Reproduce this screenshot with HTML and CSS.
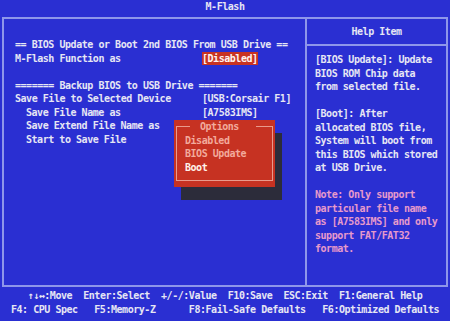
FILE: index.html
```html
<!DOCTYPE html>
<html lang="en">
<head>
    <meta charset="UTF-8">
    <meta name="viewport" content="width=device-width, initial-scale=1.0">
    <link rel="stylesheet" href="styles.css">
    <title>M-Flash</title>
</head>
<body>
    <div class="screen">
        <div class="titlebar">M-Flash</div>

        <div class="frame">
            <div class="settings">
                <div class="row">== BIOS Update or Boot 2nd BIOS From USB Drive ==</div>
                <div class="row"><span class="label">M-Flash Function as</span><span class="selected">[Disabled]</span></div>
                <div class="row"></div>
                <div class="row">======= Backup BIOS to USB Drive =======</div>
                <div class="row"><span class="label">Save File to Selected Device</span><span>[USB:Corsair F1]</span></div>
                <div class="row"><span class="label sub">Save File Name as</span><span>[A7583IMS]</span></div>
                <div class="row"><span class="label sub">Save Extend File Name as</span></div>
                <div class="row"><span class="label sub">Start to Save File</span></div>
            </div>

            <div class="help">
                <div class="help-title">Help Item</div>
                <div class="help-text">
                    <div class="row">[BIOS Update]: Update</div>
                    <div class="row">BIOS ROM Chip data</div>
                    <div class="row">from selected file.</div>
                    <div class="row"></div>
                    <div class="row">[Boot]: After</div>
                    <div class="row">allocated BIOS file,</div>
                    <div class="row">System will boot from</div>
                    <div class="row">this BIOS which stored</div>
                    <div class="row">at USB Drive.</div>
                    <div class="row"></div>
                    <div class="row note">Note: Only support</div>
                    <div class="row note">particular file name</div>
                    <div class="row note">as [A7583IMS] and only</div>
                    <div class="row note">support FAT/FAT32</div>
                    <div class="row note">format.</div>
                </div>
            </div>
        </div>

        <div class="footer">
            <div class="keys">↑↓↔:Move  Enter:Select  +/-/:Value  F10:Save  ESC:Exit  F1:General Help</div>
            <div class="keys">F4: CPU Spec   F5:Memory-Z      F8:Fail-Safe Defaults   F6:Optimized Defaults</div>
        </div>

        <!-- option popup sits over the settings list -->
        <div class="popup">
            <div class="popup-frame"></div>
            <div class="popup-title">Options</div>
            <div class="popup-items">
                <div class="row">Disabled</div>
                <div class="row">BIOS Update</div>
                <div class="row current">Boot</div>
            </div>
        </div>
    </div>
</body>
</html>
```

FILE: styles.css
```css
body {
    margin: 0;
    background: #2a2fd2;
}

.screen {
    position: relative;
    width: 450px;
    height: 321px;
    overflow: hidden;
    background: #2a2fd2;
    color: #e6e6f4;
    font: bold 10px/13.5px "DejaVu Sans Mono", monospace;
    letter-spacing: -0.46px;
}

.titlebar {
    height: 17px;
    line-height: 13px;
    text-align: center;
}

.frame {
    height: 266px;
    margin: 0 2px;
    border: 2px solid #8e96ea;
    display: flex;
}

.row {
    height: 13.5px;
    display: flex;
    white-space: pre;
}

.settings {
    width: 301px;
    padding: 19px 0 0 11px;
    box-sizing: border-box;
}

.label {
    width: 187px;
}

.label.sub {
    padding-left: 11px;
    box-sizing: border-box;
}

.selected {
    background: #c83322;
    color: #fff4f0;
}

.help {
    flex: 1;
    border-left: 2px solid #8e96ea;
}

.help-title {
    height: 25px;
    line-height: 25px;
    text-align: center;
    border-bottom: 2px solid #8e96ea;
}

.help-text {
    padding: 7px 0 0 8px;
}

.note {
    color: #e79acb;
}

.footer {
    padding-top: 2px;
    text-align: center;
}

.keys {
    height: 14px;
    line-height: 14px;
    white-space: pre;
}

.popup {
    position: absolute;
    left: 174px;
    top: 120px;
    width: 101px;
    height: 67px;
    background: #c63222;
    box-shadow: 7px 13px 0 #2c2c3a;
    color: #f2aa9c;
}

.popup-frame {
    position: absolute;
    top: 6px;
    left: 2px;
    right: 2px;
    bottom: 6px;
    border: 1px solid #e99a8c;
}

.popup-title {
    position: absolute;
    top: 0;
    left: 16px;
    padding: 0 17px 0 10px;
    background: #c63222;
    white-space: pre;
}

.popup-items {
    position: absolute;
    top: 13.5px;
    left: 11px;
}

.popup-items .current {
    color: #fff2ea;
}
```
